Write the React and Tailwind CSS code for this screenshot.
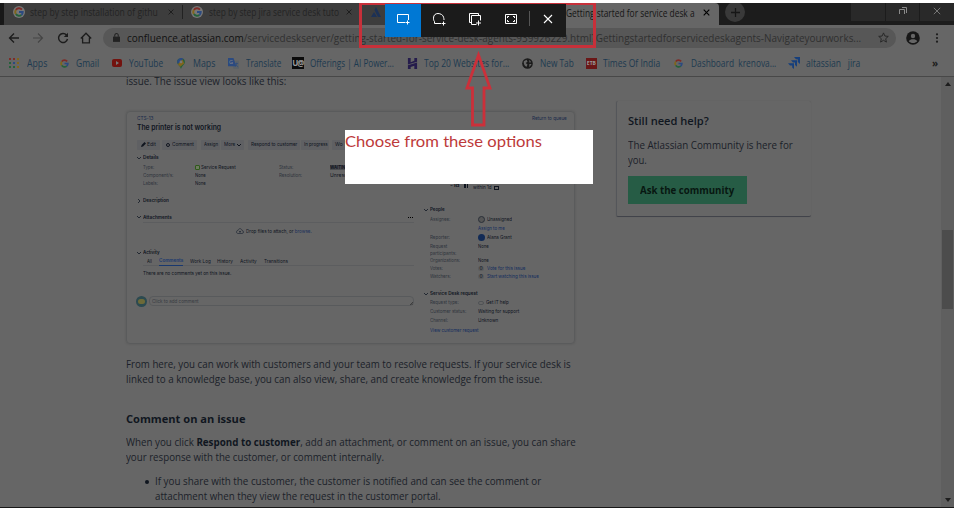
import { useLayoutEffect, useRef, useState } from "react";

// A single line of text stretched horizontally to fill the width of its box.
function Fit({ className = "", children }) {
  const box = useRef(null);
  const line = useRef(null);
  const [scale, setScale] = useState(1);
  useLayoutEffect(() => {
    const natural = line.current.offsetWidth;
    if (natural) setScale(box.current.offsetWidth / natural);
  }, [children]);
  return (
    <div ref={box} className={`shrink-0 whitespace-nowrap ${className}`}>
      <span ref={line} className="inline-block origin-left" style={{ transform: `scaleX(${scale})` }}>
        {children}
      </span>
    </div>
  );
}

function Google({ className = "" }) {
  return (
    <svg viewBox="0 0 24 24" className={`shrink-0 ${className}`} fill="none" strokeWidth="4.6">
      <path d="M19 6.2A9 9 0 0 0 4.6 7" stroke="#7e2c27" />
      <path d="M4.6 7a9 9 0 0 0 0 10" stroke="#80651b" />
      <path d="M4.6 17A9 9 0 0 0 17.8 19" stroke="#25613a" />
      <path d="M17.8 19A9 9 0 0 0 21 12h-9" stroke="#2b4a80" />
    </svg>
  );
}

function TabGoogle() {
  return (
    <div className="flex size-3 shrink-0 items-center justify-center rounded-full bg-[#777]">
      <Google className="size-2.5" />
    </div>
  );
}

function Cross({ className = "" }) {
  return (
    <svg viewBox="0 0 10 10" className={`shrink-0 ${className}`} fill="none" stroke="currentColor">
      <path d="M1 1l8 8M9 1L1 9" />
    </svg>
  );
}

function TabBar() {
  return (
    <div className="flex h-[22px] items-stretch bg-[#1c1c1c] text-[10px] leading-none">
      <div className="w-1 shrink-0 rounded-br bg-[#181818]" />
      <div className="flex w-[538px] shrink-0 items-center bg-[#3d3d3d] pb-1 text-[#1d1d1d]">
        <div className="ml-[9px]"><TabGoogle /></div>
        <Fit className="ml-[5px] w-[128px] opacity-80">step by step installation of githu</Fit>
        <Cross className="ml-[10px] size-[6px] stroke-[1.6]" />
        <div className="ml-[8px] h-3.5 w-px bg-[#222]" />
        <div className="ml-[8px]"><TabGoogle /></div>
        <Fit className="ml-[6px] w-[130px] opacity-80">step by step jira service desk tuto</Fit>
        <Cross className="ml-[7px] size-[6px] stroke-[1.6]" />
        <svg viewBox="0 0 12 12" className="ml-[18px] size-3 fill-[#1c3156]">
          <path d="M1 11l3-5 3 5zM6 1l5 10H8L4.500 4z" />
        </svg>
      </div>
      <div className="flex w-[177px] shrink-0 items-center rounded-tr bg-[#666] pb-[3px] text-[#151515]">
        <Fit className="ml-[24px] w-[129px]">Getting started for service desk a</Fit>
        <Cross className="ml-[8px] size-[7px] text-black stroke-[1.6]" />
      </div>
      <div className="ml-[6px] mt-[-1px] flex size-5 items-center justify-center rounded-full bg-[#393939]">
        <svg viewBox="0 0 10 10" className="size-[9px]" stroke="#161616" strokeWidth="1.4">
          <path d="M5 0v10M0 5h10" />
        </svg>
      </div>
      <div className="ml-auto flex h-[18px] gap-px text-[#8a8a8a]">
        <div className="w-[34px] bg-[#292929]" />
        <div className="flex w-[33px] items-center justify-center bg-[#292929] pb-[3px]">
          <svg viewBox="0 0 10 8" className="h-2 w-2.5" fill="none" stroke="currentColor">
            <path d="M1.500 7V2.500h5V7M4 .5h4.500V6" />
          </svg>
        </div>
        <div className="flex w-[34px] items-center justify-center bg-[#292929] pb-[3px]">
          <Cross className="size-2 stroke-[1]" />
        </div>
      </div>
    </div>
  );
}

function AddressBar() {
  return (
    <div className="flex h-[25px] items-center text-[#1c1c1c]">
      <svg viewBox="0 0 12 12" className="ml-[8px] size-3" fill="none" stroke="currentColor" strokeWidth="1.300">
        <path d="M11 6H2M6 1.500L1.500 6 6 10.500" />
      </svg>
      <svg viewBox="0 0 12 12" className="ml-[12px] size-3" fill="none" stroke="#444" strokeWidth="1.100">
        <path d="M1 6h9M6 1.500L10.500 6 6 10.500" />
      </svg>
      <svg viewBox="0 0 12 12" className="ml-[13px] size-3" fill="none" stroke="currentColor" strokeWidth="1.400">
        <path d="M9.500 3A4.500 4.500 0 1 0 10.500 7" />
        <path d="M11 .8v4.200H6.800z" fill="currentColor" stroke="none" />
      </svg>
      <svg viewBox="0 0 12 12" className="ml-[11px] size-3" fill="none" stroke="currentColor" strokeWidth="1.300">
        <path d="M.8 6.500L6 1.200l5.200 5.300M2.600 5.500v5.300h6.800V5.500" />
      </svg>
      <div className="ml-[11px] flex h-[20px] w-[793px] shrink-0 items-center rounded-full bg-[#575757]">
        <svg viewBox="0 0 8 10" className="ml-[10px] h-[9px] w-[7px]" fill="#222">
          <path d="M0 4h8v6H0z" />
          <path d="M2 4V2.500a2 2 0 0 1 4 0V4" fill="none" stroke="#222" strokeWidth="1.200" />
        </svg>
        <Fit className="ml-[7px] mt-px w-[734px] text-[11.5px] leading-none text-[#303030]">
          <span className="text-[#111]">confluence.atlassian.com</span>
          /servicedeskserver/getting-started-for-service-desk-agents-939926229.html?Gettingstartedforservicedeskagents-Navigateyourworks...
        </Fit>
        <svg viewBox="0 0 12 12" className="ml-[17px] size-[11px]" fill="none" stroke="#252525">
          <path d="M6 1l1.500 3.400 3.700.4-2.800 2.500.8 3.700L6 9.100 2.800 11l.8-3.700L.8 4.800l3.700-.4z" />
        </svg>
      </div>
      <svg viewBox="0 0 14 14" className="ml-[10px] size-3.5">
        <circle cx="7" cy="7" r="6.800" fill="#171717" />
        <circle cx="7" cy="5" r="2.200" fill="#666" />
        <path d="M2.800 10.300c1.500-2.600 6.900-2.600 8.400 0-2 2.400-6.400 2.400-8.400 0z" fill="#666" />
      </svg>
      <svg viewBox="0 0 4 12" className="ml-[15px] h-2.5 w-1" fill="#1c1c1c">
        <circle cx="2" cy="1.600" r="1.300" />
        <circle cx="2" cy="6" r="1.300" />
        <circle cx="2" cy="10.400" r="1.300" />
      </svg>
    </div>
  );
}

function Bookmarks() {
  return (
    <div className="flex h-[27px] items-center border-b border-[#484848] text-[10px] leading-none text-[#1d3a50]">
      <div className="ml-[9px] grid grid-cols-3 gap-[1.500px]">
        {["bg-[#7e2c27]", "bg-[#7e2c27]", "bg-[#80651b]", "bg-[#25613a]", "bg-[#2b4a80]", "bg-[#80651b]", "bg-[#25613a]", "bg-[#25613a]", "bg-[#80651b]"].map((c, i) => (
          <i key={i} className={`size-[2.300px] ${c}`} />
        ))}
      </div>
      <Fit className="ml-[8px] w-[20px]">Apps</Fit>
      <Google className="ml-[13px] size-[9px]" />
      <Fit className="ml-[7px] w-[23px]">Gmail</Fit>
      <svg viewBox="0 0 10 8" className="ml-[13px] h-2 w-2.5">
        <rect width="10" height="8" rx="2" fill="#73130f" />
        <path d="M4 2l3 2-3 2z" fill="#777" />
      </svg>
      <Fit className="ml-[7px] w-[34px]">YouTube</Fit>
      <svg viewBox="0 0 10 14" className="ml-[14px] h-[11px] w-2">
        <path d="M5 14C4 10 0 8 0 5a5 5 0 0 1 2-4l6 0a5 5 0 0 1 2 4c0 3-4 5-5 9z" fill="#25613a" />
        <path d="M0 5a5 5 0 0 1 8-4L3 8C1 7 0 6 0 5z" fill="#2b4a80" />
        <path d="M1 8l6-6 2 5-5 4z" fill="#80651b" />
        <circle cx="5" cy="5" r="1.800" fill="#777" />
      </svg>
      <Fit className="ml-[8px] w-[22px]">Maps</Fit>
      <svg viewBox="0 0 12 12" className="ml-[13px] size-[11px]">
        <path d="M4 3h8v9H6z" fill="#5b6167" />
        <path d="M0 0h6l3 9H0z" fill="#2b4a80" />
        <text x="1.200" y="7" fontSize="6" fill="#888">G</text>
        <path d="M8 6h3M9.500 5v1c0 2-1 3-2 3.500M8.500 7l2.500 3" stroke="#2b4a80" strokeWidth=".7" fill="none" />
      </svg>
      <Fit className="ml-[7px] w-[35px]">Translate</Fit>
      <div className="ml-[11px] flex size-3 items-center justify-center bg-[#0b0b0b] text-[8px] font-bold tracking-[-1px] text-[#999]">U@</div>
      <Fit className="ml-[6px] w-[84px]">Offerings | AI Power...</Fit>
      <svg viewBox="0 0 12 12" className="ml-[13px] size-[11px]" fill="#251c4c">
        <path d="M1 0h3v4.500l4-1.500V0h3v4L1 7zM1 8l10-3v7H8V8.500L4 9.800V12H1z" />
      </svg>
      <Fit className="ml-[6px] w-[85px]">Top 20 Websites for...</Fit>
      <svg viewBox="0 0 12 12" className="ml-[13px] size-[11px]">
        <circle cx="6" cy="6" r="5.800" fill="#1b1b1b" />
        <path d="M2 3.500l3-1.500 1 2-2 1.500 2 1.500-1 2.500C3 9 1.500 6 2 3.500zM8 2l2 2.500-2 .5zM8 6.500l2.500 0L8 10z" fill="#666" />
      </svg>
      <Fit className="ml-[7px] w-[34px]">New Tab</Fit>
      <div className="ml-[12px] flex h-[11px] w-[11px] items-center justify-center bg-[#6a1717] text-[5px] font-bold text-[#999]">ETB</div>
      <Fit className="ml-[6px] w-[57px]">Times Of India</Fit>
      <Google className="ml-[14px] size-[9px]" />
      <Fit className="ml-[8px] w-[85px]">Dashboard&nbsp; krenova...</Fit>
      <svg viewBox="0 0 12 12" className="ml-[12px] size-3" fill="#163f7c">
        <path d="M6 0h6v7L9.800 5V2.200H8zM3 3.200h6v6.500L7 8V5.500H5zM0 6.300h6V12L4.200 10.500V8.500H2z" />
      </svg>
      <Fit className="ml-[6px] w-[54px]">altassian&nbsp; &nbsp;jira</Fit>
      <div className="ml-[72px] text-[10px] font-bold text-[#1c1c1c]">»</div>
    </div>
  );
}

function Caret({ closed = false, className = "ml-[11px]" }) {
  return (
    <svg viewBox="0 0 4 4" className={`size-[4px] shrink-0 ${className}`} fill="none" stroke="#1c222c" strokeWidth=".9">
      <path d={closed ? "M1 0l2 2-2 2" : "M0 1l2 2 2-2"} />
    </svg>
  );
}

const chip = "flex h-[10px] items-center rounded-[1px] bg-[#5f6063]";

function IssueView() {
  return (
    <div className="ml-[126px] h-[233px] w-[449px] rounded-sm border border-[#5a5b5c] shadow-[0_0_2px_#555] font-[Inter,sans-serif] text-[5px] leading-none text-[#10151f]">
      <div className="flex h-[12px] items-center justify-between pl-[10px] pr-[7px] text-[#1a2a4a]">
        <Fit className="w-[17px]">CTS-13</Fit>
        <Fit className="w-[35px]">Return to queue</Fit>
      </div>
      <Fit className="ml-[10px] h-[10px] w-[84px] text-[7.500px] font-semibold leading-[8px]">The printer is not working</Fit>
      <div className="mt-[5px] flex h-[11px] items-center pl-[10px]">
        <div className={`${chip} w-[23px] pl-[4px]`}>
          <svg viewBox="0 0 5 5" className="mr-px size-[5px]" fill="#10151f"><path d="M0 5l.6-2L3.500 0 5 1.500 2 4.400z" /></svg>
          <Fit className="w-[9px]">Edit</Fit>
        </div>
        <div className={`${chip} ml-[2px] w-[35px] pl-[4px]`}>
          <i className="mr-[2px] size-[4px] rounded-full border border-[#10151f]" />
          <Fit className="w-[22px]">Comment</Fit>
        </div>
        <div className={`${chip} ml-[4px] w-[19px] pl-[3px]`}><Fit className="w-[14px]">Assign</Fit></div>
        <div className={`${chip} ml-px w-[23px] pl-[3px]`}>
          <Fit className="w-[11px]">More</Fit>
          <svg viewBox="0 0 4 4" className="ml-[2px] size-[4px]" fill="none" stroke="#10151f"><path d="M0 1l2 2 2-2" /></svg>
        </div>
        <div className={`${chip} ml-[4px] w-[52px] pl-[3px]`}><Fit className="w-[46px]">Respond to customer</Fit></div>
        <div className={`${chip} ml-px w-[28px] pl-[3px]`}><Fit className="w-[24px]">In progress</Fit></div>
        <div className={`${chip} ml-[3px] w-[29px] pl-[3px]`}><Fit className="w-[8px]">Wo</Fit></div>
      </div>

      <div className="flex">
        <div className="w-[287px] shrink-0">
          <div className="mt-[3px] flex h-[9px] items-center font-semibold"><Caret className="ml-[10px]" /><Fit className="ml-[2px] w-[16px]">Details</Fit></div>
          <div className="mt-px flex h-[8px] items-center">
            <Fit className="ml-[16px] w-[11px] text-[#30353d]">Type:</Fit>
            <i className="ml-[41px] size-[5px] rounded-[1px] border border-[#2f5a1a] bg-[#6d7a5f]" />
            <Fit className="ml-[1px] w-[35px]">Service Request</Fit>
            <Fit className="ml-[43px] w-[14px] text-[#30353d]">Status:</Fit>
            <Fit className="ml-[37px] w-[28px] bg-[#4b4d50] font-bold">WAITING FOR</Fit>
          </div>
          <div className="flex h-[8px] items-center">
            <Fit className="ml-[16px] w-[30px] text-[#30353d]">Component/s:</Fit>
            <Fit className="ml-[22px] w-[11px]">None</Fit>
            <Fit className="ml-[73px] w-[23px] text-[#30353d]">Resolution:</Fit>
            <Fit className="ml-[28px] w-[27px]">Unresolved</Fit>
          </div>
          <div className="flex h-[8px] items-center">
            <Fit className="ml-[16px] w-[15px] text-[#30353d]">Labels:</Fit>
            <Fit className="ml-[37px] w-[11px]">None</Fit>
          </div>
          <div className="mt-[9px] flex h-[9px] items-center font-semibold"><Caret closed className="ml-[10px]" /><Fit className="ml-[2px] w-[26px]">Description</Fit></div>
          <div className="mt-[8px] flex h-[8px] items-center font-semibold">
            <Caret className="ml-[10px]" /><Fit className="ml-[2px] w-[29px]">Attachments</Fit>
            <div className="ml-auto mr-px flex gap-px">{[0, 1, 2].map((i) => <i key={i} className="size-px bg-black" />)}</div>
          </div>
          <div className="ml-[16px] mt-px h-px bg-[#5c5d5f]" />
          <div className="mt-[4px] flex h-[8px] items-center">
            <svg viewBox="0 0 8 6" className="ml-[109px] h-[6px] w-[8px]" fill="none" stroke="#222936" strokeWidth=".7">
              <path d="M2 5.500C-.5 5 .2 2.500 2 2.500 2.500 0 5.500 0 6 2.500c2 0 2 3 0 3zM4 5V3M3 4l1-1 1 1" />
            </svg>
            <Fit className="ml-[2px] w-[66px]">Drop files to attach, or <span className="text-[#1c315c]">browse.</span></Fit>
          </div>
          <div className="mt-[13px] flex h-[9px] items-center font-semibold"><Caret className="ml-[10px]" /><Fit className="ml-[2px] w-[17px]">Activity</Fit></div>
          <div className="ml-[16px] flex h-[9px] items-center border-b border-[#5c5d5f]">
            <Fit className="ml-[4px] w-[5px]">All</Fit>
            <div className="ml-[7px] flex h-[9px] items-center border-b border-[#19386f] font-semibold text-[#19386f]"><Fit className="w-[24px]">Comments</Fit></div>
            <Fit className="ml-[7px] w-[21px]">Work Log</Fit>
            <Fit className="ml-[6px] w-[16px]">History</Fit>
            <Fit className="ml-[7px] w-[17px]">Activity</Fit>
            <Fit className="ml-[7px] w-[24px]">Transitions</Fit>
          </div>
          <Fit className="ml-[16px] mt-[5px] h-[8px] w-[88px]">There are no comments yet on this issue.</Fit>
          <div className="mt-[16px] flex h-[12px] items-center">
            <div className="ml-[9px] flex size-[11px] items-center justify-center rounded-full bg-[#2c4a50]">
              <i className="h-[5px] w-[7px] rounded-full bg-[#6d6a38]" />
            </div>
            <div className="ml-[2px] flex h-[10px] flex-1 items-center rounded-sm border border-[#585a5c] pl-[2px] text-[#383c42]">
              <Fit className="w-[47px]">Click to add comment</Fit>
              <svg viewBox="0 0 3 3" className="ml-auto mt-[5px] size-[3px]" stroke="#222" strokeWidth=".6"><path d="M0 3l3-3M1.500 3L3 1.500" /></svg>
            </div>
          </div>
        </div>

        <div className="flex-1 pt-[33px]">
          <div className="flex h-[12px] items-start">
            <Fit className="ml-[36px] w-[10px] font-semibold">-1d</Fit>
            <div className="ml-[4px] mt-px flex gap-px"><i className="h-[4px] w-[1.500px] bg-[#10151f]" /><i className="h-[4px] w-[1.500px] bg-[#10151f]" /></div>
            <Fit className="ml-[5px] mt-[2px] w-[19px]">within 1d</Fit>
            <i className="ml-[2px] mt-[3px] h-[4px] w-[5px] border border-[#10151f]" />
          </div>
          <div className="mt-[10px] flex h-[9px] items-center font-semibold"><Caret className="ml-[10px]" /><Fit className="ml-[2px] w-[15px]">People</Fit></div>
          <div className="flex h-[10px] items-center">
            <Fit className="ml-[16px] w-[20px] text-[#30353d]">Assignee:</Fit>
            <i className="ml-[28px] size-[7px] rounded-full border border-[#2a2f38] bg-[#555]" />
            <Fit className="ml-[2px] w-[25px]">Unassigned</Fit>
          </div>
          <div className="flex h-[8px] items-center text-[#142d5e]"><Fit className="ml-[64px] w-[27px]">Assign to me</Fit></div>
          <div className="flex h-[10px] items-center">
            <Fit className="ml-[16px] w-[20px] text-[#30353d]">Reporter:</Fit>
            <i className="ml-[28px] size-[7px] rounded-full bg-[#122b56]" />
            <Fit className="ml-[2px] w-[25px]">Alana Grant</Fit>
          </div>
          <div className="flex h-[8px] items-center">
            <Fit className="ml-[16px] w-[17px] text-[#30353d]">Request</Fit>
            <Fit className="ml-[31px] w-[11px]">None</Fit>
          </div>
          <div className="flex h-[6px] items-center text-[#30353d]"><Fit className="ml-[16px] w-[26px]">participants:</Fit></div>
          <div className="flex h-[8px] items-center">
            <Fit className="ml-[16px] w-[30px] text-[#30353d]">Organizations:</Fit>
            <Fit className="ml-[18px] w-[11px]">None</Fit>
          </div>
          <div className="flex h-[8px] items-center">
            <Fit className="ml-[16px] w-[13px] text-[#30353d]">Votes:</Fit>
            <div className="ml-[35px] w-[6px] rounded-full bg-[#5b5c5e] text-center">0</div>
            <Fit className="ml-[3px] w-[38px] text-[#142d5e]">Vote for this issue</Fit>
          </div>
          <div className="flex h-[8px] items-center">
            <Fit className="ml-[16px] w-[21px] text-[#30353d]">Watchers:</Fit>
            <div className="ml-[27px] w-[6px] rounded-full bg-[#5b5c5e] text-center">0</div>
            <Fit className="ml-[3px] w-[52px] text-[#142d5e]">Start watching this issue</Fit>
          </div>
          <div className="mt-[9px] flex h-[9px] items-center font-semibold"><Caret className="ml-[10px]" /><Fit className="ml-[2px] w-[48px]">Service Desk request</Fit></div>
          <div className="flex h-[9px] items-center">
            <Fit className="ml-[16px] w-[29px] text-[#30353d]">Request type:</Fit>
            <i className="ml-[19px] h-[4px] w-[6px] rounded-sm border border-[#505356]" />
            <Fit className="ml-[2px] w-[23px]">Get IT help</Fit>
          </div>
          <div className="flex h-[9px] items-center">
            <Fit className="ml-[16px] w-[36px] text-[#30353d]">Customer status:</Fit>
            <Fit className="ml-[12px] w-[41px]">Waiting for support</Fit>
          </div>
          <div className="flex h-[8px] items-center">
            <Fit className="ml-[16px] w-[18px] text-[#30353d]">Channel:</Fit>
            <Fit className="ml-[30px] w-[20px]">Unknown</Fit>
          </div>
          <div className="mt-[2px] flex h-[9px] items-center text-[#142d5e]"><Fit className="ml-[16px] w-[49px]">View customer request</Fit></div>
        </div>
      </div>
    </div>
  );
}

function Article() {
  return (
    <div className="w-[616px] shrink-0 text-[10.500px] leading-[15px] text-[#1b1f29]">
      <Fit className="ml-[126px] h-[11px] w-[160px] leading-[9px]">issue. The issue view looks like this:</Fit>
      <div className="h-[23px]" />
      <IssueView />
      <Fit className="ml-[126px] mt-[13px] h-[15px] w-[445px]">From here, you can work with customers and your team to resolve requests. If your service desk is</Fit>
      <Fit className="ml-[126px] h-[15px] w-[416px]">linked to a knowledge base, you can also view, share, and create knowledge from the issue.</Fit>
      <Fit className="ml-[126px] mt-[24px] h-[15px] w-[119px] text-[11px] font-bold text-[#10161f]">Comment on an issue</Fit>
      <Fit className="ml-[126px] mt-[9px] h-[15px] w-[450px]">
        When you click <b className="text-[#10161f]">Respond to customer</b>, add an attachment, or comment on an issue, you can share
      </Fit>
      <Fit className="ml-[126px] h-[15px] w-[258px]">your response with the customer, or comment internally.</Fit>
      <div className="mt-[9px] flex items-center">
        <i className="ml-[145px] size-[4px] rounded-full bg-[#10161f]" />
        <Fit className="ml-[6px] h-[15px] w-[386px]">If you share with the customer, the customer is notified and can see the comment or</Fit>
      </div>
      <Fit className="ml-[155px] h-[15px] w-[286px]">attachment when they view the request in the customer portal.</Fit>
    </div>
  );
}

function HelpCard() {
  return (
    <div className="mt-[24px] h-[116px] w-[195px] rounded-[2px] border-b border-l border-b-[#41434a] border-l-[#54565a] pl-[11px] text-[10.500px] leading-[15px] text-[#1b1f29] shadow-[0_0_1px_#555]">
      <Fit className="mt-[12px] h-[15px] w-[81px] text-[11.5px] font-semibold text-[#10161f]">Still need help?</Fit>
      <Fit className="mt-[10px] h-[15px] w-[165px]">The Atlassian Community is here for</Fit>
      <Fit className="h-[15px] w-[19px]">you.</Fit>
      <div className="mt-[8px] flex h-[28px] w-[119px] items-center bg-[#265c45] pl-[12px]">
        <Fit className="w-[94px] text-[10.5px] font-bold text-[#081711]">Ask the community</Fit>
      </div>
    </div>
  );
}

function Scrollbar() {
  return (
    <div className="ml-auto flex w-[13px] flex-col items-center bg-[#5f5f5f]">
      <svg viewBox="0 0 6 4" className="mt-[5px] h-[4px] w-[6px]" fill="#1d1d1d"><path d="M0 4l3-4 3 4z" /></svg>
      <div className="mt-[144px] h-[79px] w-[11px] bg-[#4c4c4c]" />
      <svg viewBox="0 0 6 4" className="mb-[5px] mt-auto h-[4px] w-[6px]" fill="#1d1d1d"><path d="M0 0l3 4 3-4z" /></svg>
    </div>
  );
}

function SnipBar() {
  return (
    <div className="absolute left-[385px] top-[4px] flex h-[33px] w-[181px] items-center bg-[#1b1b1b] text-white">
      <div className="flex h-full w-[36px] items-center justify-center bg-[#0078d4] pb-[4px]">
        <svg viewBox="0 0 14 12" className="h-3 w-3.5" fill="none" stroke="currentColor">
          <path d="M9 9.500H1.500v-8h11V7M11.500 7.500v4M9.500 9.500h4" />
        </svg>
      </div>
      <div className="flex w-[36px] justify-center pb-[4px]">
        <svg viewBox="0 0 14 14" className="size-3.5" fill="none" stroke="currentColor">
          <path d="M9 11.500H2.500v-2C1.500 8.500 1.500 7 1.500 6c0-3 2-4.500 4.500-4.500S11 3 11.500 5c.2 1 .5 1.500.5 3M11.500 9.500v4M9.500 11.500h4" />
        </svg>
      </div>
      <div className="flex w-[36px] justify-center pb-[4px]">
        <svg viewBox="0 0 14 14" className="size-3.5" fill="none" stroke="currentColor">
          <path d="M3.500 10.500h-2v-9h9v2M8.500 12.500h-5v-9h9v5M10.500 8.500v5M8 11h5" />
        </svg>
      </div>
      <div className="flex w-[36px] justify-center pb-[4px]">
        <svg viewBox="0 0 14 12" className="h-3 w-3.5" fill="none" stroke="currentColor">
          <path d="M1.500 1.500h11v9h-11zM3.500 5V3.500H5M9 3.500h1.500V5M10.500 7v1.500H9M5 8.500H3.500V7" />
        </svg>
      </div>
      <div className="mb-[4px] h-[15px] w-px bg-[#555]" />
      <div className="flex flex-1 justify-center pb-[4px]"><Cross className="size-[10px] stroke-[1.100]" /></div>
    </div>
  );
}

export default function App() {
  return (
    <div className="relative h-[508px] w-[963px] overflow-hidden bg-white pt-[3px] font-['Open_Sans','Noto_Sans',sans-serif]">
      <div className="flex h-[505px] w-[954px] flex-col overflow-hidden bg-[#666]">
        <TabBar />
        <AddressBar />
        <Bookmarks />
        <div className="flex h-[430px] shrink-0 overflow-hidden">
          <Article />
          <HelpCard />
          <Scrollbar />
        </div>
        <div className="h-px w-full bg-[#181818]" />
      </div>

      <div className="absolute left-[359px] top-[3px] h-[45px] w-[237px] border-[3px] border-t-2 border-[#c7303a]" />
      <SnipBar />
      <svg viewBox="0 0 30 80" className="absolute left-[463px] top-[50px] h-[80px] w-[30px]" fill="none" stroke="#cb303a" strokeWidth="2.800">
        <path d="M15.500 5L27 38h-6v37H9.500V38H4z" />
      </svg>
      <div className="absolute left-[345px] top-[130px] h-[54px] w-[248px] bg-white font-[Lato,sans-serif] text-[16px] leading-[22px] text-[#bd3a3a]">
        <Fit className="w-[197px]">Choose from these options</Fit>
      </div>
    </div>
  );
}
